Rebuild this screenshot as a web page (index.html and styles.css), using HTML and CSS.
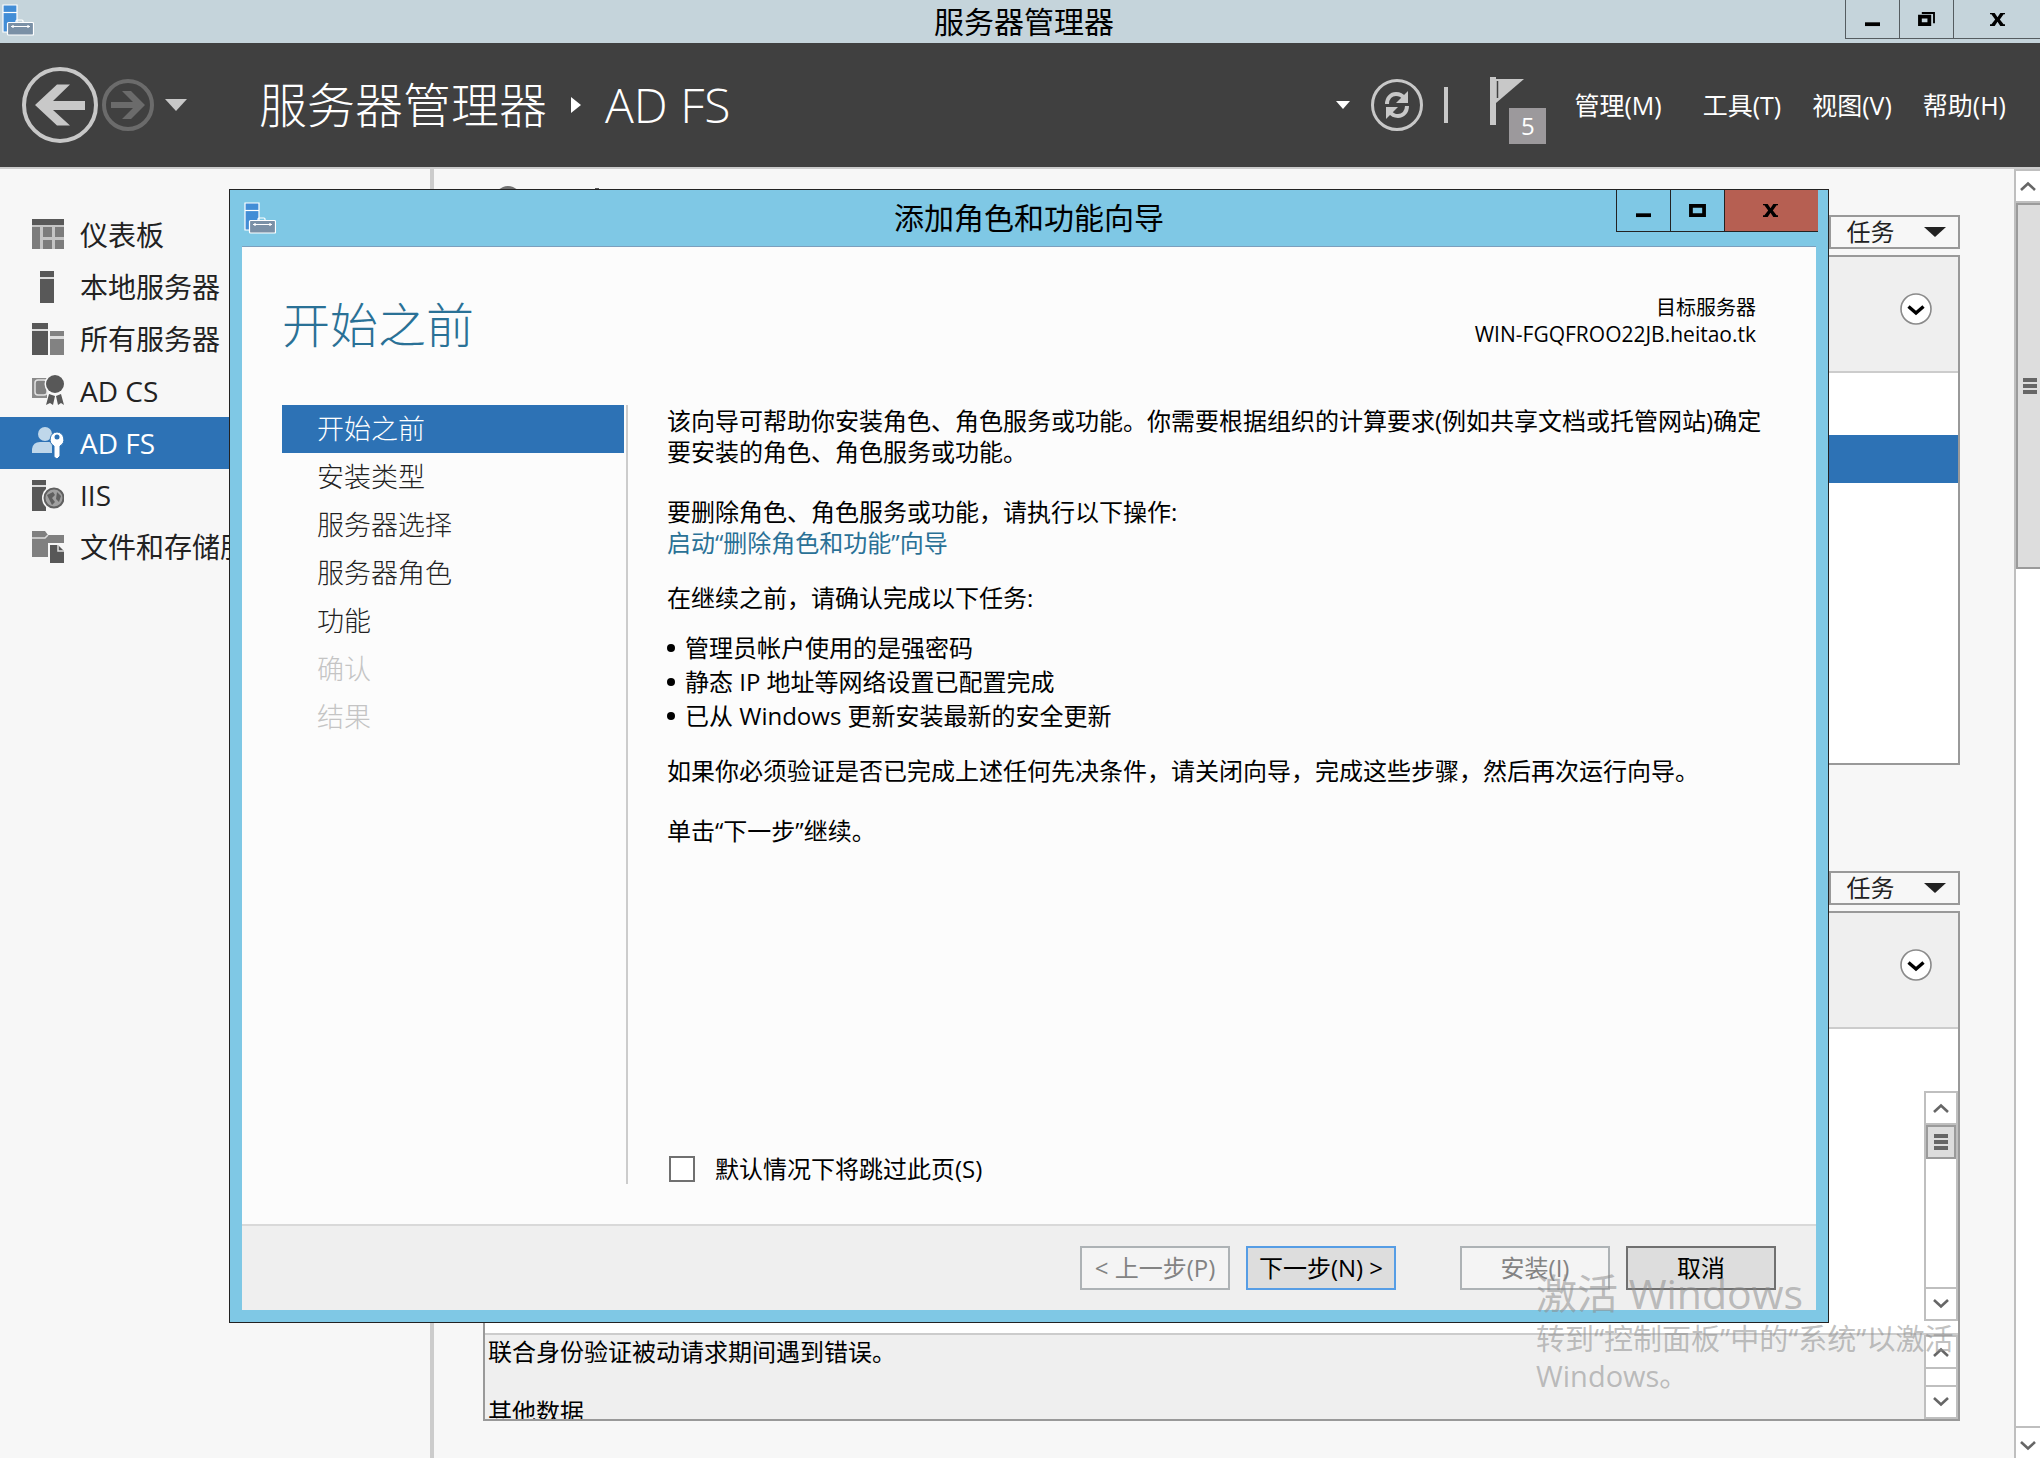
FILE: index.html
```html
<!DOCTYPE html>
<html lang="zh-CN">
<head>
    <meta charset="UTF-8">
    <meta name="viewport" content="width=device-width, initial-scale=1.0">
    <title>服务器管理器</title>
    <link rel="stylesheet" href="styles.css">
</head>
<body>
    <!-- Shared icons -->
    <svg class="sprite" aria-hidden="true">
        <symbol id="icon-app" viewBox="0 0 32 32">
            <path d="M1 1h14v27H1z" fill="#428dd6" stroke="#fff" stroke-width="1.2"/>
            <path d="M1 8.500h14" stroke="#fff" stroke-width="1.2"/>
            <path d="M14 19v-2q0-1 1-1h5q1 0 1 1v2" fill="none" stroke="#fff" stroke-width="1.2"/>
            <rect x="5.500" y="18.500" width="26" height="12.500" rx="1" fill="#7a90a6" stroke="#fff" stroke-width="1.2"/>
            <path d="M9 22.500h19M11 21v3M26 21v3" stroke="#fff" stroke-width="1.2"/>
        </symbol>
        <symbol id="icon-up" viewBox="0 0 16 10">
            <path d="M1 9l7-6.500L15 9" fill="none" stroke="#666" stroke-width="2.600"/>
        </symbol>
        <symbol id="icon-down" viewBox="0 0 16 10">
            <path d="M1 1l7 6.500L15 1" fill="none" stroke="#666" stroke-width="2.600"/>
        </symbol>
        <symbol id="icon-expand" viewBox="0 0 32 32">
            <circle cx="16" cy="16" r="15" fill="#fff" stroke="#8a8a8a" stroke-width="1.600"/>
            <path d="M8.500 13.500l7.500 6.500 7.500-6.500" fill="none" stroke="#000" stroke-width="3.400"/>
        </symbol>
        <symbol id="icon-min" viewBox="0 0 16 16"><path d="M0 11h16v4H0z"/></symbol>
        <symbol id="icon-close" viewBox="0 0 16 16">
            <path d="M0 1h5l3 4.500L11 1h5v1.500h-1.500L10.500 8l4 5H16v2h-5l-3-4.500L5 15H0v-2h1.500l4-5-4-5.500H0z"/>
        </symbol>
    </svg>

    <div class="titlebar">
        <svg class="app-icon"><use href="#icon-app"/></svg>
        <span class="titlebar-text">服务器管理器</span>
        <div class="window-buttons">
            <button class="win-btn" aria-label="最小化"><svg><use href="#icon-min"/></svg></button>
            <button class="win-btn" aria-label="还原">
                <svg viewBox="0 0 18 16"><path d="M2 5h10v8H2z" fill="none" stroke="#000" stroke-width="4"/><path d="M4 1h13v11" fill="none" stroke="#000" stroke-width="2"/></svg>
            </button>
            <button class="win-btn win-close" aria-label="关闭"><svg><use href="#icon-close"/></svg></button>
        </div>
    </div>

    <header class="header">
        <div class="nav-buttons">
            <button class="nav-back" aria-label="后退">
                <svg viewBox="0 0 76 76"><circle cx="38" cy="38" r="36" fill="none" stroke="#c8c8c8" stroke-width="4"/><path d="M13 38l22-20.500h13L31 34h32v9H31l17 15.500H35z" fill="#c8c8c8"/></svg>
            </button>
            <button class="nav-forward" aria-label="前进">
                <svg viewBox="0 0 52 52"><circle cx="26" cy="26" r="24" fill="none" stroke="#6b6b6b" stroke-width="4"/><path d="M43 26L29 12h-9l11 11H9v6h22L20 40h9z" fill="#6b6b6b"/></svg>
            </button>
            <button class="nav-drop" aria-label="历史记录">
                <svg viewBox="0 0 22 14"><path d="M0 1h22L11 13z" fill="#c8c8c8"/></svg>
            </button>
        </div>
        <h1 class="breadcrumb">
            <span>服务器管理器</span>
            <svg viewBox="0 0 10 16"><path d="M0 0l10 8-10 8z" fill="#fff"/></svg>
            <span>AD FS</span>
        </h1>
        <div class="toolbar">
            <button class="refresh-drop" aria-label="刷新选项"><svg viewBox="0 0 14 8"><path d="M0 0h14L7 8z" fill="#fff"/></svg></button>
            <button class="refresh" aria-label="刷新">
                <svg viewBox="0 0 52 52">
                    <circle cx="26" cy="26" r="24.500" fill="none" stroke="#c8c8c8" stroke-width="3"/>
                    <path d="M16 25c0-6 4-10 9-10 4 0 6 1 8 4" fill="none" stroke="#c8c8c8" stroke-width="4"/>
                    <path d="M37 12v12H25z" fill="#c8c8c8"/>
                    <path d="M36 27c0 6-4 10-9 10-4 0-6-1-8-4" fill="none" stroke="#c8c8c8" stroke-width="4"/>
                    <path d="M15 40V28h12z" fill="#c8c8c8"/>
                </svg>
            </button>
            <span class="separator"></span>
            <button class="flag" aria-label="通知">
                <svg viewBox="0 0 34 48"><path d="M0 0h6v48H0z" fill="#c8c8c8"/><path d="M6 2h28L6 26z" fill="#c8c8c8"/><path d="M7.500 4v17" stroke="#404040" stroke-width="1.500"/></svg>
                <span class="badge">5</span>
            </button>
            <nav class="menu">
                <button>管理(M)</button>
                <button>工具(T)</button>
                <button>视图(V)</button>
                <button>帮助(H)</button>
            </nav>
        </div>
    </header>

    <div class="workspace">
        <nav class="sidebar">
            <a href="#">
                <svg viewBox="0 0 32 32"><path d="M0 0h32v6H0z" fill="#585858"/><path d="M0 6h32v24H0z" fill="#c4c4c4"/><path d="M0 8h8v22H0zM11 8h9v10h-9zM23 8h9v10h-9zM11 21h9v9h-9zM23 21h9v9h-9z" fill="#7c7c7c"/></svg>
                仪表板
            </a>
            <a href="#">
                <svg viewBox="0 0 32 32"><path d="M8 0h14v32H8z" fill="#585858"/><path d="M8 6h14v2H8z" fill="#ddd"/></svg>
                本地服务器
            </a>
            <a href="#">
                <svg viewBox="0 0 32 32"><path d="M0 0h16v32H0z" fill="#585858"/><path d="M0 6h16v2H0z" fill="#ddd"/><path d="M18 8h14v24H18z" fill="#828282"/><path d="M18 13h14v3H18z" fill="#ddd"/></svg>
                所有服务器
            </a>
            <a href="#">
                <svg viewBox="0 0 32 32"><path d="M0 3h15v20H0z" fill="#8a8a8a"/><rect x="3" y="5" width="12" height="15" rx="3" fill="#808080" stroke="#e2e2e2" stroke-width="1.500"/><circle cx="23" cy="9" r="10.500" fill="#f7f7f7"/><circle cx="23" cy="9" r="9" fill="#585858"/><path d="M17 19l6 2-2 9-3-2-4 2zM24 21l5-2 3 11-3-2-3 2z" fill="#585858"/></svg>
                AD CS
            </a>
            <a href="#" class="active">
                <svg viewBox="0 0 32 32"><circle cx="13" cy="7" r="7" fill="#bfd7ea"/><path d="M0 26v-4q1-7 8-7h9q3 0 3 5v6z" fill="#bfd7ea"/><path d="M25 5a7.500 7.500 0 0 1 3 14v10l-3 3-3-2V19a7.500 7.500 0 0 1 3-14z" fill="#fff" stroke="#2d72b5" stroke-width="1"/><circle cx="25" cy="10" r="2.500" fill="#2d72b5"/></svg>
                AD FS
            </a>
            <a href="#">
                <svg viewBox="0 0 32 32"><path d="M0 1h14v31H0z" fill="#585858"/><path d="M0 6h14v2H0z" fill="#ddd"/><circle cx="22" cy="19" r="12" fill="#f7f7f7"/><circle cx="22" cy="19" r="9.500" fill="#a0a0a0" stroke="#606060" stroke-width="2"/><path d="M15 16l6-3 2 3-3 3 3 4-3 3zM25 13l4 4-2 6-3-3z" fill="#606060"/></svg>
                IIS
            </a>
            <a href="#">
                <svg viewBox="0 0 32 32"><path d="M0 0h13l3 4h16v22H0z" fill="#808080"/><path d="M0 7h13l3-3" fill="none" stroke="#ddd" stroke-width="1.500"/><path d="M16 12h16v20H16z" fill="#f7f7f7"/><path d="M18 14h8l6 6v12H18z" fill="#585858"/><path d="M26 14v6h6" fill="none" stroke="#ddd" stroke-width="1.500"/></svg>
                文件和存储服务
            </a>
        </nav>

        <main class="content">
            <section class="tile">
                <div class="tile-head">
                    <svg class="tile-icon" viewBox="0 0 110 32"><circle cx="11" cy="13" r="13" fill="#707070"/><path d="M98 2h4v4h-4z" fill="#555"/></svg>
                    <button class="tasks">任务<svg viewBox="0 0 22 10"><path d="M0 0h22L11 10z" fill="#222"/></svg></button>
                </div>
                <div class="tile-box">
                    <div class="tile-filter"><button class="expand" aria-label="展开"><svg><use href="#icon-expand"/></svg></button></div>
                    <div class="tile-rows"><div class="row-selected"></div></div>
                </div>
            </section>

            <section class="tile">
                <div class="tile-head">
                    <button class="tasks">任务<svg viewBox="0 0 22 10"><path d="M0 0h22L11 10z" fill="#222"/></svg></button>
                </div>
                <div class="tile-box">
                    <div class="tile-filter"><button class="expand" aria-label="展开"><svg><use href="#icon-expand"/></svg></button></div>
                    <div class="events">
                        <div class="scrollbar">
                            <button aria-label="向上"><svg><use href="#icon-up"/></svg></button>
                            <div class="thumb"><i></i><i></i><i></i></div>
                            <div class="track"></div>
                            <button aria-label="向下"><svg><use href="#icon-down"/></svg></button>
                        </div>
                    </div>
                    <div class="event-detail">
                        <div class="event-text">
                            <p>联合身份验证被动请求期间遇到错误。</p>
                            <p>其他数据</p>
                        </div>
                        <div class="scrollbar">
                            <button aria-label="向上"><svg><use href="#icon-up"/></svg></button>
                            <div class="track"></div>
                            <button aria-label="向下"><svg><use href="#icon-down"/></svg></button>
                        </div>
                    </div>
                </div>
            </section>
        </main>

        <div class="scrollbar page-scroll">
            <button aria-label="向上"><svg><use href="#icon-up"/></svg></button>
            <div class="thumb"><i></i><i></i><i></i></div>
            <div class="track"></div>
            <button aria-label="向下"><svg><use href="#icon-down"/></svg></button>
        </div>
    </div>

    <!-- Wizard window -->
    <div class="dialog" role="dialog" aria-labelledby="dialog-title">
        <div class="dialog-bar">
            <svg class="app-icon"><use href="#icon-app"/></svg>
            <span class="titlebar-text" id="dialog-title">添加角色和功能向导</span>
            <div class="window-buttons">
                <button class="win-btn" aria-label="最小化"><svg><use href="#icon-min"/></svg></button>
                <button class="win-btn" aria-label="最大化">
                    <svg viewBox="0 0 18 16"><path d="M2 3h14v10H2z" fill="none" stroke="#000" stroke-width="4"/></svg>
                </button>
                <button class="win-btn win-close" aria-label="关闭"><svg><use href="#icon-close"/></svg></button>
            </div>
        </div>

        <div class="dialog-page">
            <div class="dialog-head">
                <h2>开始之前</h2>
                <div class="target">
                    <div>目标服务器</div>
                    <div class="target-name">WIN-FGQFROO22JB.heitao.tk</div>
                </div>
            </div>

            <div class="dialog-main">
                <ol class="steps">
                    <li class="current">开始之前</li>
                    <li>安装类型</li>
                    <li>服务器选择</li>
                    <li>服务器角色</li>
                    <li>功能</li>
                    <li class="disabled">确认</li>
                    <li class="disabled">结果</li>
                </ol>
                <div class="step-body">
                    <p>该向导可帮助你安装角色、角色服务或功能。你需要根据组织的计算要求(例如共享文档或托管网站)确定要安装的角色、角色服务或功能。</p>
                    <p class="remove">要删除角色、角色服务或功能，请执行以下操作:<br><a href="#">启动“删除角色和功能”向导</a></p>
                    <p class="confirm">在继续之前，请确认完成以下任务:</p>
                    <ul>
                        <li>管理员帐户使用的是强密码</li>
                        <li>静态 IP 地址等网络设置已配置完成</li>
                        <li>已从 Windows 更新安装最新的安全更新</li>
                    </ul>
                    <p>如果你必须验证是否已完成上述任何先决条件，请关闭向导，完成这些步骤，然后再次运行向导。</p>
                    <p>单击“下一步”继续。</p>
                    <label class="skip"><input type="checkbox">默认情况下将跳过此页(S)</label>
                </div>
            </div>

            <div class="dialog-foot">
                <button disabled>&lt; 上一步(P)</button>
                <button class="primary">下一步(N) &gt;</button>
                <button class="install" disabled>安装(I)</button>
                <button>取消</button>
            </div>
        </div>
    </div>

    <div class="watermark">
        <div class="watermark-title">激活 Windows</div>
        <div>转到“控制面板”中的“系统”以激活 Windows。</div>
    </div>
</body>
</html>
```
FILE: styles.css
```css
:root {
    --bar: #c5d4db;
    --header: #404040;
    --page: #f7f7f7;
    --blue: #2d72b5;
    --frame: #7fc8e5;
    --teal: #2a7196;
    --border: #999;
    --line: #ccc;
}

* {
    margin: 0;
    padding: 0;
    box-sizing: border-box;
}

body {
    position: relative;
    display: flex;
    flex-direction: column;
    height: 100vh;
    overflow: hidden;
    font-family: "Open Sans", "Noto Sans CJK SC", sans-serif;
    font-size: 24px;
    line-height: 30px;
    color: #000;
    background: var(--page);
}

button {
    font: inherit;
    color: inherit;
    background: none;
    border: none;
    display: flex;
    align-items: center;
    justify-content: center;
}

svg {
    display: block;
    flex: none;
}

.sprite {
    position: absolute;
    width: 0;
    height: 0;
}

/* Title bars */
.titlebar {
    position: relative;
    display: flex;
    justify-content: center;
    flex: none;
    height: 43px;
    padding-left: 8px;
    background: var(--bar);
}

.titlebar-text {
    font-size: 30px;
    line-height: 43px;
}

.app-icon {
    position: absolute;
    left: 2px;
    top: 4px;
    width: 32px;
    height: 32px;
}

.window-buttons {
    position: absolute;
    top: 0;
    right: 0;
    display: flex;
    height: 39px;
    border-bottom: 1px solid #555c60;
}

.win-btn {
    width: 54px;
    border-left: 1px solid #555c60;
}

.win-btn svg {
    width: 17px;
    height: 15px;
}

.win-close {
    width: 87px;
}

/* Header */
.header {
    display: flex;
    align-items: center;
    flex: none;
    height: 126px;
    padding: 0 34px 0 22px;
    background: var(--header);
    border-bottom: 2px solid var(--line);
    color: #fff;
}

.nav-buttons {
    display: flex;
    align-items: center;
    gap: 4px;
    width: 237px;
}

.nav-back svg {
    width: 76px;
    height: 76px;
}

.nav-forward svg {
    width: 52px;
    height: 52px;
}

.nav-drop svg {
    width: 22px;
    height: 14px;
    margin-left: 7px;
}

.breadcrumb {
    display: flex;
    align-items: center;
    gap: 24px;
    font-size: 48px;
    line-height: 60px;
    font-weight: 300;
}

.breadcrumb svg {
    width: 10px;
    height: 16px;
}

.toolbar {
    display: flex;
    align-items: center;
    margin-left: auto;
}

.refresh-drop svg {
    width: 14px;
    height: 8px;
}

.refresh {
    margin: 0 21px;
}

.refresh svg {
    width: 52px;
    height: 52px;
}

.separator {
    width: 4px;
    height: 36px;
    background: #c8c8c8;
}

.flag {
    position: relative;
    width: 56px;
    height: 68px;
    margin-left: 42px;
    align-items: flex-start;
    justify-content: flex-start;
    padding-top: 6px;
}

.flag svg {
    width: 34px;
    height: 48px;
}

.badge {
    position: absolute;
    right: 0;
    bottom: -5px;
    width: 37px;
    height: 36px;
    line-height: 36px;
    background: #9c999c;
}

.menu {
    display: flex;
    gap: 31px;
    margin-left: 28px;
    font-size: 25px;
}

.menu button:first-child {
    margin-right: 10px;
}

/* Body of the manager */
.workspace {
    display: flex;
    flex: 1;
    min-height: 0;
}

.sidebar {
    flex: none;
    width: 434px;
    padding-top: 40px;
    border-right: 4px solid var(--line);
}

.sidebar a {
    display: flex;
    align-items: center;
    gap: 16px;
    height: 52px;
    padding-left: 32px;
    font-size: 28px;
    color: #222;
    text-decoration: none;
}

.sidebar a.active {
    background: var(--blue);
    color: #fff;
}

.sidebar svg {
    width: 32px;
    height: 32px;
}

.content {
    display: flex;
    flex-direction: column;
    flex: 1;
    gap: 77px;
    padding: 17px 54px 37px 49px;
}

.tile {
    display: flex;
    flex-direction: column;
    flex: 1;
    gap: 6px;
    min-height: 0;
}

.tile-head {
    display: flex;
    align-items: flex-end;
    flex: none;
    height: 63px;
}

.tile-icon {
    align-self: flex-start;
    width: 110px;
    height: 32px;
    margin-left: 14px;
}

.tasks {
    width: 131px;
    height: 34px;
    margin-left: auto;
    padding-left: 3px;
    gap: 29px;
    border: 2px solid var(--border);
    color: #222;
}

.tasks svg {
    width: 22px;
    height: 10px;
}

.tile-box {
    display: flex;
    flex-direction: column;
    flex: 1;
    min-height: 0;
    border: 2px solid var(--border);
    background: #fff;
}

.tile-filter {
    display: flex;
    align-items: center;
    justify-content: flex-end;
    flex: none;
    height: 116px;
    padding: 0 26px 10px 0;
    background: #efefef;
    border-bottom: 2px solid var(--line);
}

.expand svg {
    width: 32px;
    height: 32px;
}

.tile-rows {
    padding-top: 62px;
}

.row-selected {
    height: 48px;
    background: var(--blue);
}

.events {
    display: flex;
    justify-content: flex-end;
    flex: 1;
    padding: 62px 0 12px;
}

.event-detail {
    display: flex;
    flex: none;
    height: 86px;
    background: #efefef;
    border-top: 2px solid var(--line);
}

.event-text {
    flex: 1;
    padding: 2px 3px;
    overflow: hidden;
}

.event-text p + p {
    margin-top: 30px;
}

/* Scroll bars */
.scrollbar {
    display: flex;
    flex-direction: column;
    flex: none;
    width: 34px;
    background: #fff;
    border: 2px solid #bfbfbf;
}

.scrollbar button {
    flex: none;
    height: 32px;
}

.scrollbar button svg {
    width: 16px;
    height: 10px;
}

.scrollbar button:first-child {
    border-bottom: 2px solid #bfbfbf;
}

.scrollbar button:last-child {
    border-top: 2px solid #bfbfbf;
}

.track {
    flex: 1;
}

.thumb {
    display: flex;
    flex-direction: column;
    align-items: center;
    justify-content: center;
    gap: 2px;
    height: 34px;
    background: #ddd;
    border: 2px solid #9b9b9b;
}

.thumb i {
    width: 14px;
    height: 4px;
    background: #666;
}

.page-scroll {
    width: 26px;
    border-right: none;
    border-bottom: none;
}

.page-scroll button:last-child {
    padding-top: 6px;
}

.page-scroll .thumb {
    height: 366px;
    padding-left: 2px;
    border-right: none;
}

/* Wizard */
.dialog {
    position: absolute;
    top: 189px;
    right: 211px;
    bottom: 135px;
    left: 229px;
    display: flex;
    flex-direction: column;
    padding: 0 12px 12px;
    background: var(--frame);
    border: 1px solid #222;
}

.dialog-bar {
    position: relative;
    display: flex;
    justify-content: center;
    flex: none;
    height: 56px;
}

.dialog-bar .titlebar-text {
    line-height: 56px;
}

.dialog-bar .app-icon {
    top: 12px;
}

.dialog-bar .window-buttons {
    right: -2px;
    height: 42px;
    border-color: #222;
}

.dialog-bar .win-btn {
    border-color: #222;
}

.dialog-bar .win-close {
    width: 94px;
    padding-right: 3px;
    background: #b65f52;
}

.dialog-page {
    display: flex;
    flex-direction: column;
    flex: 1;
    min-height: 0;
    background: #fcfcfc;
    border-top: 1px solid #7c9fbd;
}

.dialog-head {
    display: flex;
    justify-content: space-between;
    flex: none;
    height: 158px;
    padding: 48px 60px 0 40px;
}

.dialog-head h2 {
    font-size: 48px;
    line-height: 60px;
    font-weight: 300;
    color: var(--teal);
}

.target {
    font-size: 20px;
    line-height: 26px;
    text-align: right;
}

.target-name {
    font-size: 21px;
}

.dialog-main {
    display: flex;
    flex: 1;
    min-height: 0;
    padding: 0 40px 40px;
}

.steps {
    flex: none;
    width: 346px;
    padding-right: 2px;
    border-right: 2px solid var(--line);
    list-style: none;
    font-size: 27px;
    font-weight: 300;
    line-height: 48px;
    color: #222;
}

.steps li {
    padding-left: 35px;
}

.steps .current {
    background: var(--blue);
    color: #fff;
}

.steps .disabled {
    color: #c4c4c4;
}

.step-body {
    display: flex;
    flex-direction: column;
    flex: 1;
    padding-left: 39px;
}

.step-body p {
    margin-bottom: 29px;
    line-height: 31px;
}

.step-body .remove {
    margin-bottom: 24px;
}

.step-body a {
    color: var(--teal);
    text-decoration: none;
}

.step-body .confirm {
    margin-bottom: 18px;
}

.step-body ul {
    margin-bottom: 22px;
    list-style: none;
}

.step-body li {
    display: flex;
    align-items: center;
    gap: 10px;
    line-height: 34px;
}

.step-body li::before {
    content: "";
    width: 8px;
    height: 8px;
    border-radius: 50%;
    background: #000;
}

.skip {
    display: flex;
    align-items: center;
    gap: 20px;
    margin-top: auto;
    padding-left: 2px;
}

.skip input {
    appearance: none;
    width: 26px;
    height: 26px;
    background: #fff;
    border: 2px solid #707070;
}

.dialog-foot {
    display: flex;
    align-items: center;
    justify-content: flex-end;
    gap: 16px;
    flex: none;
    height: 86px;
    padding-right: 40px;
    background: #efefef;
    border-top: 2px solid #d9d9d9;
}

.dialog-foot button {
    width: 150px;
    height: 44px;
    background: #ddd;
    border: 2px solid #707070;
    white-space: nowrap;
}

.dialog-foot button:disabled {
    background: #f4f4f4;
    border-color: #adb2b5;
    color: #838383;
}

.dialog-foot .primary {
    border-color: #569de5;
}

.dialog-foot .install {
    margin-left: 48px;
}

.watermark {
    position: absolute;
    right: 80px;
    bottom: 64px;
    width: 424px;
    font-size: 29px;
    line-height: 37px;
    color: rgba(140, 140, 140, 0.55);
    pointer-events: none;
}

.watermark-title {
    font-size: 41px;
    line-height: 54px;
}
```
